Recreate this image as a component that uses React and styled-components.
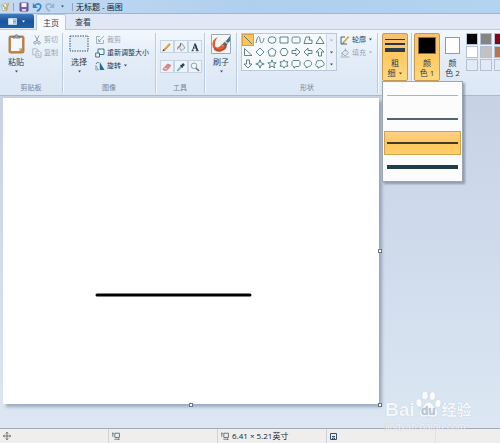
import React, { useState } from 'react';
import styled, { createGlobalStyle, css } from 'styled-components';

const GlobalStyle = createGlobalStyle`
	* { box-sizing: border-box; }
	body {
		margin: 0;
		overflow: hidden;
		font-family: "Open Sans", "Noto Sans CJK SC", sans-serif;
		font-size: 7px;
		line-height: 10px;
		color: #2b3c55;
	}
	button {
		margin: 0;
		padding: 0;
		border: 0;
		background: none;
		font: inherit;
		color: inherit;
	}
	svg { display: block; flex: none; }
`;

const Window = styled.div`
	display: flex;
	flex-direction: column;
	min-height: 100vh;
`;

const TitleBar = styled.header`
	display: flex;
	align-items: center;
	height: 14px;
	border-bottom: 1px solid #9db5d0;
	background: linear-gradient(90deg, #c3daf1, #b0cfef 50%, #b4d3f1);
`;

const QuickButton = styled.button`
	display: flex;
	justify-content: center;
	width: 13px;
	opacity: ${props => props.disabled ? 0.5 : 1};
`;

const Divider = styled.span`
	width: 1px;
	height: 8px;
	margin: 0 3px;
	background: #8ea5bf;
`;

const Title = styled.h1`
	margin: 0;
	font-size: 8px;
	font-weight: 400;
	line-height: 12px;
	color: #111c2a;
`;

const TabRow = styled.nav`
	display: flex;
	height: 15px;
	background: #dfe8f4;
`;

const FileButton = styled.button`
	display: flex;
	align-items: center;
	justify-content: center;
	gap: 4px;
	width: 34px;
	height: 14px;
	border-radius: 0 2px 0 0;
	background: linear-gradient(#3f7cbd, #1c539a 50%, #1b62a8);
`;

const Tab = styled.button`
	width: 30px;
	margin-left: 2px;
	padding: 0 4px;
	font-size: 8px;
	line-height: 14px;
	${props => props.$active && css`
		height: 16px;
		border: 1px solid #b9c9dc;
		border-bottom: 0;
		border-radius: 2px 2px 0 0;
		background: #f7fafe;
		z-index: 1;
	`}
`;

const Ribbon = styled.div`
	display: flex;
	height: 67px;
	padding-top: 3px;
	border-top: 1px solid #bccbdd;
	border-bottom: 1px solid #a9b9cf;
	background: linear-gradient(#f3f8fe, #e4edf8 40%, #dce7f5);
`;

const Group = styled.section`
	display: flex;
	flex: none;
	flex-direction: column;
	width: ${props => props.$width}px;
	height: 60px;
	padding: 0 4px;
	border-right: 1px solid #bccadd;
	box-shadow: 1px 0 #f5f9fe;
`;

const GroupBody = styled.div`
	display: flex;
	height: 50px;
	gap: ${props => props.$gap || 0}px;
`;

const GroupLabel = styled.div`
	text-align: center;
	color: #75859b;
`;

const LargeButton = styled.button`
	display: flex;
	flex: none;
	flex-direction: column;
	align-items: center;
	gap: 3px;
	width: 24px;
	height: 48px;
	padding-top: 1px;
	font-size: 8px;
`;

const SmallColumn = styled.div`
	display: flex;
	flex-direction: column;
`;

const SmallButton = styled.button`
	display: flex;
	align-items: center;
	gap: 2px;
	height: 13px;
	white-space: nowrap;
	color: ${props => props.disabled ? '#9aa5b4' : '#263953'};
`;

const Tools = styled.div`
	display: grid;
	grid-template-columns: repeat(3, 14px);
	grid-auto-rows: 13px;
	align-content: start;
	row-gap: 7px;
	padding-top: 7px;
`;

const ToolButton = styled.button`
	display: flex;
	align-items: center;
	justify-content: center;
	border: 1px solid #c9d4e3;
	background: #edf3fa;
`;

const Gallery = styled.div`
	display: flex;
	height: 38px;
	border: 1px solid #b9c7da;
	background: #f7fafd;
`;

const ShapeGrid = styled.div`
	display: grid;
	grid-template-columns: repeat(7, 12px);
	grid-auto-rows: 12px;
`;

const ShapeButton = styled.button`
	display: flex;
	align-items: center;
	justify-content: center;
	${props => props.$active && css`
		border: 1px solid #dba143;
		background: #ffc35e;
	`}
`;

const GalleryScroll = styled.div`
	display: grid;
	grid-template-rows: repeat(3, 12px);
	width: 10px;
	border-left: 1px solid #cdd8e6;
	background: #e9f0f8;

	button {
		display: flex;
		align-items: center;
		justify-content: center;
	}
`;

const Anchor = styled.div`
	position: relative;
`;

const OptionButton = styled.button`
	display: flex;
	flex: none;
	flex-direction: column;
	align-items: center;
	gap: 4px;
	width: ${props => props.$width}px;
	height: 48px;
	padding-top: 3px;
	border: 1px solid transparent;
	border-radius: 2px;
	font-size: 8px;
	${props => props.$active && css`
		border-color: #c49b51;
		background: linear-gradient(#f5c172, #ffca64 50%, #ffd97e);
	`}
`;

const Caption = styled.span`
	display: flex;
	flex-direction: column;
	align-items: center;
	white-space: nowrap;
`;

const CaptionLine = styled.span`
	display: flex;
	align-items: center;
	gap: 2px;
`;

const Swatch = styled.span`
	width: ${props => props.$size}px;
	height: 17px;
	border: 1px solid ${props => props.$border};
	background: ${props => props.$color};
`;

const Colors = styled.div`
	display: flex;
	flex: 1;
	min-width: 0;
	overflow: hidden;
	padding-left: 2px;
`;

const Palette = styled.div`
	display: grid;
	grid-template-columns: repeat(3, 12px);
	grid-auto-rows: 12px;
	align-content: start;
	gap: 1px 2px;
	margin-left: 1px;
`;

const PaletteCell = styled.button`
	border: 1px solid #b4c1d2;
	background: ${props => props.$color};
`;

const SizeMenu = styled.div`
	position: absolute;
	top: 48px;
	left: 0;
	z-index: 2;
	width: 81px;
	padding: 1px 1px 2px;
	border: 1px solid #9da5b1;
	background: #fcfcfc;
	box-shadow: 2px 2px 2px rgba(70, 80, 100, 0.45);
`;

const SizeItem = styled.button`
	display: flex;
	align-items: center;
	width: 100%;
	height: 24px;
	padding: 0 2px;
	border: 1px solid transparent;
	${props => props.$active && css`
		border-color: #d0a452;
		background: linear-gradient(#fbd08b, #ffc75c 50%, #ffcf6b);
	`}
`;

const Stroke = styled.span`
	width: 100%;
	height: ${props => props.$weight}px;
	background: ${props => props.$color};
`;

const Workspace = styled.main`
	display: flex;
	flex: 1;
	padding: 2px 121px 24px 3px;
	background: linear-gradient(#c8d2e5, #d0dcec 50%, #dce7f3);
`;

const Sheet = styled.div`
	position: relative;
	flex: 1;
	background: #fff;
	box-shadow: 3px 3px 3px rgba(105, 122, 150, 0.55);
`;

const Drawing = styled.svg`
	width: 100%;
	height: 100%;
	position: absolute;
`;

const Handle = styled.span`
	position: absolute;
	width: 4px;
	height: 4px;
	border: 1px solid #66758a;
	background: #fff;
	${props => props.$edge === 'right' && css`top: calc(50% - 2px); right: -3px;`}
	${props => props.$edge === 'bottom' && css`left: calc(50% - 2px); bottom: -3px;`}
	${props => props.$edge === 'corner' && css`right: -3px; bottom: -3px;`}
`;

const StatusBar = styled.footer`
	display: flex;
	height: 15px;
	border-top: 1px solid #a3a9b5;
	background: #f0eeed;
`;

const StatusCell = styled.div`
	display: flex;
	align-items: center;
	gap: 3px;
	width: 109px;
	padding-left: 3px;
	border-right: 1px solid #d2d2d5;
	font-size: 8px;
	color: #222;
	&:last-child { border-right-color: #e3e2e3; }
`;

const Watermark = styled.div`
	position: absolute;
	right: 27px;
	bottom: 10px;
	z-index: 3;
	width: 88px;
	color: rgba(255, 255, 255, 0.9);
	font-family: "Liberation Sans", "Noto Sans CJK SC", sans-serif;
	text-shadow: 0 0 1px #a9b9cd;
`;

const WatermarkTop = styled.div`
	display: flex;
	align-items: flex-end;
	height: 32px;
	padding-bottom: 2px;
	font-size: 19px;
	font-weight: 700;
	line-height: 18px;
`;

const WatermarkName = styled.span`
	font-size: 15px;
`;

const WatermarkUrl = styled.div`
	font-size: 10px;
	line-height: 12px;
	opacity: 0.75;
`;

const Arrow = ({ color = '#3e4c60' }) => (
	<svg width="5" height="3" viewBox="0 0 5 3"><path d="M1 .5h3L2.5 2.5z" fill={color} /></svg>
);

const Icon = ({ size = 10, children }) => (
	<svg width={size} height={size} viewBox="0 0 10 10" fill="none" stroke="#34516b" strokeWidth=".9">{children}</svg>
);

const AppIcon = () => (
	<Icon>
		<path d="M1 3l5-2 2 6-5 2z" fill="#f6e9c7" stroke="#8ba4b7" strokeWidth=".6" />
		<circle cx="3.5" cy="4" r="1" fill="#5faad0" stroke="none" />
		<circle cx="5" cy="6" r="1" fill="#76b564" stroke="none" />
		<path d="M8.5 1L6 9" stroke="#e0a13e" strokeWidth="1.5" />
	</Icon>
);

const SaveIcon = () => (
	<Icon>
		<path d="M1 1h8v8H1z" fill="#7b64a5" stroke="#56498a" />
		<path d="M2.5 1h5v4h-5z" fill="#f6f5fc" stroke="none" />
		<path d="M3 7h4v2H3z" fill="#d5d4e9" stroke="none" />
	</Icon>
);

const UndoIcon = ({ color, flip }) => (
	<Icon>
		<g transform={flip ? 'translate(10 0) scale(-1 1)' : undefined}>
			<path d="M3 3.5c3-3 7-1 5.4 2.3C7.8 7.2 6.5 8.5 4.8 9" stroke={color} strokeWidth="1.7" />
			<path d="M.8 1v5h5z" fill={color} stroke="none" />
		</g>
	</Icon>
);

const FileIcon = () => (
	<svg width="9" height="7" viewBox="0 0 9 7">
		<path d="M.5.5h8v6h-8z" fill="#e9f3fc" stroke="#b5d3ed" />
		<path d="M5 2h3M5 3.5h3M5 5h3" stroke="#41719f" strokeWidth=".7" />
	</svg>
);

const PasteIcon = () => (
	<svg width="17" height="20" viewBox="0 0 17 20">
		<rect x="1" y="2" width="15" height="17" rx="1.5" fill="#c88a4b" stroke="#99683b" strokeWidth=".8" />
		<path d="M3 4h11v10l-3 3H3z" fill="#f5f8fc" />
		<path d="M14 14h-3v3z" fill="#b8c7d8" />
		<path d="M5 4V2.5h2C7 0 10 0 10 2.5h2V4z" fill="#a4a9af" stroke="#5c6570" strokeWidth=".7" />
	</svg>
);

const CutIcon = () => (
	<Icon>
		<path d="M3 .5l3 6M7 .5l-3 6" stroke="#8d9aab" />
		<circle cx="3" cy="7.8" r="1.3" stroke="#8d9aab" />
		<circle cx="7" cy="7.8" r="1.3" stroke="#8d9aab" />
	</Icon>
);

const CopyIcon = () => (
	<Icon>
		<path d="M.8.8h4l1 1v5h-5z" fill="#eef2f7" stroke="#a8b4c3" />
		<path d="M4 3.2h3.5l1.5 1.5v4.5H4zM5.3 5.5h2M5.3 7.3h2.5" fill="#f3f6fa" stroke="#a0adbe" />
	</Icon>
);

const SelectIcon = () => (
	<svg width="20" height="20" viewBox="0 0 20 20">
		<rect x="1" y="2" width="18" height="15" fill="#e3edf7" stroke="#345675" strokeDasharray="1.5 1" />
	</svg>
);

const CropIcon = () => (
	<Icon><path d="M5 1.5H1.5v7h7V5M4 6l5-5M3.5 4v2.500H6" stroke="#9ba8b9" /></Icon>
);

const ResizeIcon = () => (
	<Icon>
		<path d="M3 1h6v5.5H3z" fill="#eef6fa" stroke="#286984" />
		<path d="M.7 5h3.8v4H.7z" fill="#fff" stroke="#286984" />
	</Icon>
);

const RotateIcon = () => (
	<Icon>
		<path d="M4.8 1v8h4.7z" fill="#1e718e" stroke="none" />
		<path d="M.8 4.5L3.5 9H.8z" fill="#d4e5f0" stroke="#5887a7" strokeWidth=".6" />
		<path d="M1 3c1-2 2-2 3-1" stroke="#356e9d" />
	</Icon>
);

const PencilIcon = () => (
	<Icon>
		<path d="M2 8.2L8 1.8" stroke="#d39b43" strokeWidth="2" />
		<path d="M2.6 6L7 1.3" stroke="#f6dc92" strokeWidth=".7" />
		<path d="M.5 9.5l.7-2.4 1.6 1.5z" fill="#3e3d3d" stroke="none" />
	</Icon>
);

const FillIcon = () => (
	<Icon>
		<path d="M3 4l3-2.5L9 6 5.2 8.8z" fill="#e4edf4" stroke="#71818e" strokeWidth=".7" />
		<path d="M3.5 4.2C1 4 .8 6 1.4 8L3 5.5z" fill="#d5714b" stroke="none" />
		<path d="M4.5 1v3.5" strokeWidth=".7" />
	</Icon>
);

const TextIcon = () => (
	<Icon>
		<path d="M2.5 8.5L5 1.5l2.5 7M3.5 6h3M1.5 8.7h2.3M5.8 8.7h3" stroke="#243a52" />
		<path d="M5.2 2.2l2.1 6" stroke="#243a52" strokeWidth="1.5" />
	</Icon>
);

const EraserIcon = () => (
	<Icon>
		<path d="M1 6.8L5.5 2 9 3.3 4.8 8.5 1.3 8z" fill="#e78685" stroke="#b86468" strokeWidth=".6" />
		<path d="M2 6.3l3.2.9" stroke="#fae1df" />
	</Icon>
);

const PickerIcon = () => (
	<Icon>
		<path d="M1.2 8.8l4-4" stroke="#6cadba" strokeWidth="1.7" />
		<path d="M5 4.8L8 2" stroke="#28425a" strokeWidth="2.5" />
		<path d="M4.2 3.3l2.6 2.5" stroke="#28425a" />
	</Icon>
);

const ZoomIcon = () => (
	<Icon>
		<circle cx="4" cy="3.8" r="2.8" fill="#edf7fd" stroke="#8b9bac" />
		<path d="M6 6l3 3" stroke="#776c61" strokeWidth="1.5" />
	</Icon>
);

const BrushIcon = () => (
	<svg width="20" height="20" viewBox="0 0 20 20">
		<path d="M.5.5h19v19H.5z" fill="#f5f6f6" stroke="#9ca9b8" />
		<path d="M7 3C1 5 0 11 3 15c4 4 11 2 13-4-3 2-5 1-5-1-3 5-8 4-7 0 0-3 1-5 3-7z" fill="#e35d35" />
		<path d="M3.500 14.500c3.500 4 9 2 11.500-1.500" stroke="#bf492d" strokeWidth="2" fill="none" />
		<path d="M11 10.5l4-4 2 2-2 5z" fill="#6e655c" />
		<path d="M15 7l4-5v5l-2 2z" fill="#3e7588" />
		<path d="M14 7.5l2.5 2" stroke="#dbe1e3" strokeWidth="1.3" />
	</svg>
);

const OutlineIcon = () => (
	<Icon>
		<path d="M1 2v7h6" stroke="#34516b" />
		<path d="M1 2h4" stroke="#34516b" />
		<path d="M3.5 7.5L8.7 1.5" stroke="#d9a735" strokeWidth="1.8" />
		<path d="M2.5 8.8l.4-1.8 1.2 1z" fill="#444" stroke="none" />
	</Icon>
);

const FillShapeIcon = () => (
	<Icon>
		<path d="M2 5l3.5-3.5L8.5 5 5 8z" fill="#e2e8ef" stroke="#9daabb" />
		<path d="M.5 9h9M2 5v3M5.3.5v3" stroke="#9daabb" />
	</Icon>
);

const LinesIcon = () => (
	<svg width="20" height="17" viewBox="0 0 20 17">
		<path d="M0 2.5h20" stroke="#30353b" />
		<path d="M0 7h20" stroke="#30353b" strokeWidth="2" />
		<path d="M0 13h20" stroke="#2b3a49" strokeWidth="4" />
	</svg>
);

const MoveIcon = () => (
	<Icon size={8}><path d="M5 0v10M0 5h10M3.5 2L5 .5 6.5 2M3.5 8L5 9.5 6.5 8M2 3.5L.5 5 2 6.5M8 3.5L9.5 5 8 6.5" stroke="#49515b" /></Icon>
);

const SizeIcon = () => (
	<Icon size={8}>
		<path d="M1 1v5M0 2l1-1 1 1M3 9h6M8 8l1 1-1 1" />
		<path d="M3.5 1.5h5.8v5.3H3.5z" />
	</Icon>
);

const DiskIcon = () => (
	<svg width="7" height="7" viewBox="0 0 7 7" fill="none" stroke="#34516b">
		<path d="M.5.5h6v6h-6zM2 3.500h3M2.500 6V5h2v1" />
	</svg>
);

const PawIcon = () => (
	<svg width="27" height="30" viewBox="0 0 27 30" fill="#fff" fillOpacity=".85" stroke="#b9c7d8" strokeWidth=".4">
		<ellipse cx="4" cy="14" rx="3" ry="4.2" transform="rotate(-12 4 14)" />
		<ellipse cx="10" cy="6.5" rx="3" ry="4.3" />
		<ellipse cx="17.5" cy="7" rx="3" ry="4.3" transform="rotate(10 17.5 7)" />
		<ellipse cx="23" cy="14.5" rx="3" ry="4" transform="rotate(12 23 14.5)" />
		<path d="M13.5 13c4 0 4 4 7 6.500 4 4 2 9-3 8.500-3-.6-5-.6-8 0-5 .8-7-5-3-8.500 3-2.500 3-6.500 7-6.500z" />
		<text x="6" y="26" fontSize="12" fontWeight="700" fill="#b5c4d6" stroke="none">du</text>
	</svg>
);

const shapes = [
	['直线', 'M1 1l8 8'],
	['曲线', 'M1 8C3-2 5 2 5 5s3 5 4-2'],
	['椭圆', 'M1 5a4 3.300 0 108 0 4 3.300 0 10-8 0'],
	['矩形', 'M1 2h8v6H1z'],
	['圆角矩形', 'M2.500 2h5Q9 2 9 3.500v3Q9 8 7.500 8h-5Q1 8 1 6.500v-3Q1 2 2.500 2z'],
	['多边形', 'M1 8.500L3 2h4L6 5l3 0v3.500z'],
	['三角形', 'M5 1.500L9 8.500H1z'],
	['直角三角形', 'M1.500 1.500v7H9z'],
	['菱形', 'M5 1l4 4-4 4-4-4z'],
	['五边形', 'M5 1l4 3-1.500 5h-5L1 4z'],
	['六边形', 'M3 1.500h4L9 5 7 8.500H3L1 5z'],
	['右箭头', 'M1 3.500h4V1l4 4-4 4V6.500H1z'],
	['左箭头', 'M9 3.500H5V1L1 5l4 4V6.500h4z'],
	['上箭头', 'M3.500 9V5H1l4-4 4 4H6.500v4z'],
	['下箭头', 'M3.500 1v4H1l4 4 4-4H6.500V1z'],
	['四角星', 'M5 .8l1.100 3.100L9.200 5 6.100 6.100 5 9.200 3.900 6.100.8 5l3.100-1.100z'],
	['五角星', 'M5 .8l1.200 3h3L6.800 5.700l1 3.300L5 7.100 2.200 9l1-3.300L.8 3.800h3z'],
	['六角星', 'M5 .8l1.300 2H9L7.800 5 9 7.200H6.300L5 9.200l-1.300-2H1L2.200 5 1 2.800h2.700z'],
	['圆角标注', 'M2 1.500h6l1 1v4l-1 1H5L3 9.200V7.500H2l-1-1v-4z'],
	['椭圆标注', 'M3.200 7.500C-.5 6 1 1.500 5 1.500s5.500 5 .5 6.200L3 9z'],
	['云形标注', 'M3 7.600C0 7.500.2 5 1.300 4.600.8 2 3 1 4.200 1.700c2-1 4 .1 3.700 1.400 2 .9 1.400 4-.8 4.200L5 8 3 9.300z'],
];

const tools = [
	['铅笔', PencilIcon],
	['用颜色填充', FillIcon],
	['文本', TextIcon],
	['橡皮擦', EraserIcon],
	['颜色选取器', PickerIcon],
	['放大镜', ZoomIcon],
];

const sizes = [
	{ weight: 1, color: '#b0b3b5' },
	{ weight: 2, color: '#52656d' },
	{ weight: 2, color: '#3f3929' },
	{ weight: 4, color: '#203d4a' },
];

const palette = ['#050505', '#858585', '#83051c', '#fff', '#c2c2c3', '#b77650', '#e1eaf5', '#e1eaf5', '#e1eaf5'];

const App = () => {
	const [shape, setShape] = useState(0);
	const [size, setSize] = useState(2);
	const [open, setOpen] = useState(true);

	return (
		<Window>
			<GlobalStyle />
			<TitleBar>
				<AppIcon />
				<Divider />
				<QuickButton aria-label="保存"><SaveIcon /></QuickButton>
				<QuickButton aria-label="撤消"><UndoIcon color="#3485c5" /></QuickButton>
				<QuickButton aria-label="重做" disabled><UndoIcon color="#6f91ad" flip /></QuickButton>
				<QuickButton aria-label="自定义快速访问工具栏"><Arrow /></QuickButton>
				<Divider />
				<Title>无标题 - 画图</Title>
			</TitleBar>

			<TabRow>
				<FileButton aria-label="文件"><FileIcon /><Arrow color="#fff" /></FileButton>
				<Tab $active>主页</Tab>
				<Tab>查看</Tab>
			</TabRow>

			<Ribbon>
				<Group $width={63}>
					<GroupBody $gap={4}>
						<LargeButton><PasteIcon />粘贴<Arrow /></LargeButton>
						<SmallColumn>
							<SmallButton disabled><CutIcon />剪切</SmallButton>
							<SmallButton disabled><CopyIcon />复制</SmallButton>
						</SmallColumn>
					</GroupBody>
					<GroupLabel>剪贴板</GroupLabel>
				</Group>

				<Group $width={93}>
					<GroupBody $gap={4}>
						<LargeButton><SelectIcon />选择<Arrow /></LargeButton>
						<SmallColumn>
							<SmallButton disabled><CropIcon />裁剪</SmallButton>
							<SmallButton><ResizeIcon />重新调整大小</SmallButton>
							<SmallButton><RotateIcon />旋转<Arrow /></SmallButton>
						</SmallColumn>
					</GroupBody>
					<GroupLabel>图像</GroupLabel>
				</Group>

				<Group $width={49}>
					<GroupBody>
						<Tools>
							{tools.map(([name, ToolIcon]) => (
								<ToolButton key={name} aria-label={name}><ToolIcon /></ToolButton>
							))}
						</Tools>
					</GroupBody>
					<GroupLabel>工具</GroupLabel>
				</Group>

				<Group $width={32}>
					<LargeButton><BrushIcon />刷子<Arrow /></LargeButton>
				</Group>

				<Group $width={141}>
					<GroupBody $gap={3}>
						<Gallery>
							<ShapeGrid>
								{shapes.map(([name, path], i) => (
									<ShapeButton key={name} aria-label={name} $active={shape === i} onClick={() => setShape(i)}>
										<Icon><path d={path} stroke="#38686f" strokeWidth=".8" /></Icon>
									</ShapeButton>
								))}
							</ShapeGrid>
							<GalleryScroll>
								<button aria-label="上一行"><Arrow color="#a9b4c2" /></button>
								<button aria-label="下一行"><Arrow /></button>
								<button aria-label="更多"><Arrow /></button>
							</GalleryScroll>
						</Gallery>
						<SmallColumn>
							<SmallButton><OutlineIcon />轮廓<Arrow /></SmallButton>
							<SmallButton disabled><FillShapeIcon />填充<Arrow color="#a4afbc" /></SmallButton>
						</SmallColumn>
					</GroupBody>
					<GroupLabel>形状</GroupLabel>
				</Group>

				<Group $width={34}>
					<Anchor>
						<OptionButton $width={26} $active={open} aria-expanded={open} onClick={() => setOpen(!open)}>
							<LinesIcon />
							<Caption>
								<span>粗</span>
								<CaptionLine>细<Arrow /></CaptionLine>
							</Caption>
						</OptionButton>
						{open && (
							<SizeMenu>
								{sizes.map((item, i) => (
									<SizeItem key={i} aria-label={`粗细 ${i + 1}`} $active={size === i} onClick={() => setSize(i)}>
										<Stroke $weight={item.weight} $color={item.color} />
									</SizeItem>
								))}
							</SizeMenu>
						)}
					</Anchor>
				</Group>

				<Colors>
					<OptionButton $width={26} $active>
						<Swatch $size={18} $color="#000" $border="#8a6b3a" />
						<Caption><span>颜</span><span>色 1</span></Caption>
					</OptionButton>
					<OptionButton $width={25}>
						<Swatch $size={15} $color="#fff" $border="#8d9bae" />
						<Caption><span>颜</span><span>色 2</span></Caption>
					</OptionButton>
					<Palette>
						{palette.map((color, i) => (
							<PaletteCell key={i} aria-label={`颜色 ${i + 1}`} $color={color} />
						))}
					</Palette>
				</Colors>
			</Ribbon>

			<Workspace>
				<Sheet>
					<Drawing viewBox="0 0 376 306" preserveAspectRatio="xMinYMin meet">
						<path d="M94 197h153" stroke="#000" strokeWidth="3" strokeLinecap="round" />
					</Drawing>
					<Handle $edge="right" />
					<Handle $edge="bottom" />
					<Handle $edge="corner" />
				</Sheet>
			</Workspace>

			<StatusBar>
				<StatusCell><MoveIcon /></StatusCell>
				<StatusCell><SizeIcon /></StatusCell>
				<StatusCell><SizeIcon />6.41 × 5.21英寸</StatusCell>
				<StatusCell><DiskIcon /></StatusCell>
			</StatusBar>

			<Watermark>
				<WatermarkTop>Bai<PawIcon /><WatermarkName>经验</WatermarkName></WatermarkTop>
				<WatermarkUrl>jingyan.baidu.com</WatermarkUrl>
			</Watermark>
		</Window>
	);
};

export default App;
